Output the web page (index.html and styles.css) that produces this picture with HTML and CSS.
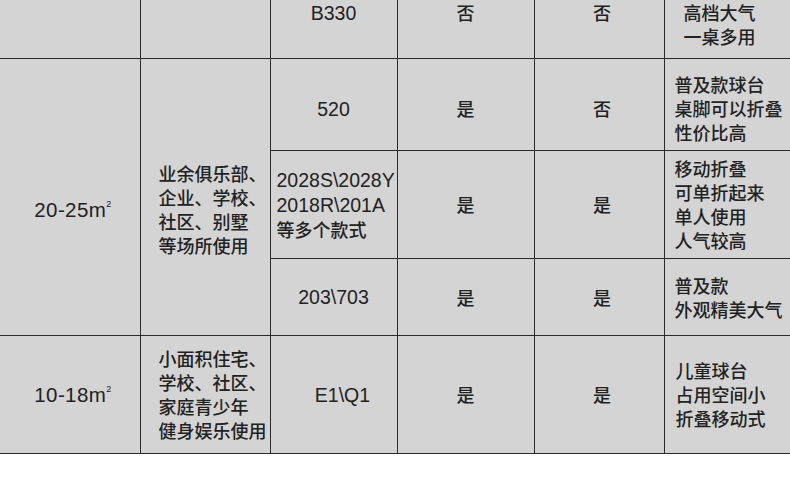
FILE: index.html
```html
<!DOCTYPE html>
<html lang="zh-CN">
<head>
<meta charset="utf-8">
<title>球台对比</title>
<link rel="stylesheet" href="styles.css">
</head>
<body>
<table class="spec">
  <colgroup>
    <col class="c-area">
    <col class="c-place">
    <col class="c-model">
    <col class="c-yes1">
    <col class="c-yes2">
    <col class="c-desc">
  </colgroup>
  <tr class="r1">
    <td class="first"></td>
    <td></td>
    <td class="ctr top"><span class="lat">B330</span></td>
    <td class="ctr top">否</td>
    <td class="ctr top col5">否</td>
    <td class="desc top indent">高档大气<br>一桌多用</td>
  </tr>
  <tr class="r2">
    <td class="first ctr area shift" rowspan="3"><span class="lat">20-25m<sup>2</sup></span></td>
    <td class="place shift" rowspan="3">业余俱乐部、<br>企业、学校、<br>社区、别墅<br>等场所使用</td>
    <td class="ctr down"><span class="lat">520</span></td>
    <td class="ctr down">是</td>
    <td class="ctr down col5">否</td>
    <td class="desc down">普及款球台<br>桌脚可以折叠<br>性价比高</td>
  </tr>
  <tr class="r3">
    <td class="model"><span class="lat">2028S\2028Y<br>2018R\201A</span><br>等多个款式</td>
    <td class="ctr">是</td>
    <td class="ctr col5">是</td>
    <td class="desc">移动折叠<br>可单折起来<br>单人使用<br>人气较高</td>
  </tr>
  <tr class="r4">
    <td class="ctr"><span class="lat">203\703</span></td>
    <td class="ctr">是</td>
    <td class="ctr col5">是</td>
    <td class="desc">普及款<br>外观精美大气</td>
  </tr>
  <tr class="r5">
    <td class="first ctr area"><span class="lat">10-18m<sup>2</sup></span></td>
    <td class="place">小面积住宅、<br>学校、社区、<br>家庭青少年<br>健身娱乐使用</td>
    <td class="ctr e1"><span class="lat">E1\Q1</span></td>
    <td class="ctr">是</td>
    <td class="ctr col5">是</td>
    <td class="desc d5">儿童球台<br>占用空间小<br>折叠移动式</td>
  </tr>
</table>
</body>
</html>
```

FILE: styles.css
```css
html, body {
  margin: 0;
  padding: 0;
  background: #ffffff;
}

body {
  width: 790px;
  height: 486px;
  overflow: hidden;
  font-family: "Noto Sans CJK SC", "Liberation Sans", sans-serif;
  font-size: 18px;
  font-weight: 500;
  line-height: 24px;
  color: #222222;
}

.spec {
  width: 790px;
  table-layout: fixed;
  border-collapse: collapse;
  background: #d4d4d4;
}

.c-area { width: 140px; }
.c-place { width: 130px; }
.c-model { width: 127px; }
.c-yes1 { width: 137px; }
.c-yes2 { width: 130px; }
.c-desc { width: 126px; }

.spec td {
  border: 1px solid #2b2b2b;
  padding: 0;
  vertical-align: middle;
  white-space: nowrap;
}

.spec tr.r1 td {
  border-top: none;
}

.spec td.first {
  border-left: none;
}

.spec td.desc {
  border-right: none;
  padding-left: 10px;
}

.r1 { height: 58px; }
.r2 { height: 92px; }
.r3 { height: 108px; }
.r4 { height: 77px; }
.r5 { height: 118px; }

.ctr {
  text-align: center;
}

.top {
  vertical-align: top !important;
  padding-top: 0;
}

.indent {
  padding-left: 19px !important;
}

.down {
  padding-top: 8px !important;
}

.shift {
  padding-top: 25px !important;
}

.col5 {
  padding-left: 6px !important;
}

.lat {
  font-family: "Liberation Sans", "Noto Sans CJK SC", sans-serif;
  font-weight: 400;
  font-size: 19.5px;
}

.area .lat {
  font-size: 20.5px;
  letter-spacing: 0.4px;
}

.lat sup {
  font-size: 9px;
  line-height: 0;
  vertical-align: 10px;
  letter-spacing: 0;
}

.area {
  padding-left: 6px !important;
}

.place {
  padding-left: 18px !important;
}

.model {
  padding-left: 6px !important;
}

.e1 {
  padding-left: 18px !important;
}

.d5 {
  padding-left: 11px !important;
}
```
